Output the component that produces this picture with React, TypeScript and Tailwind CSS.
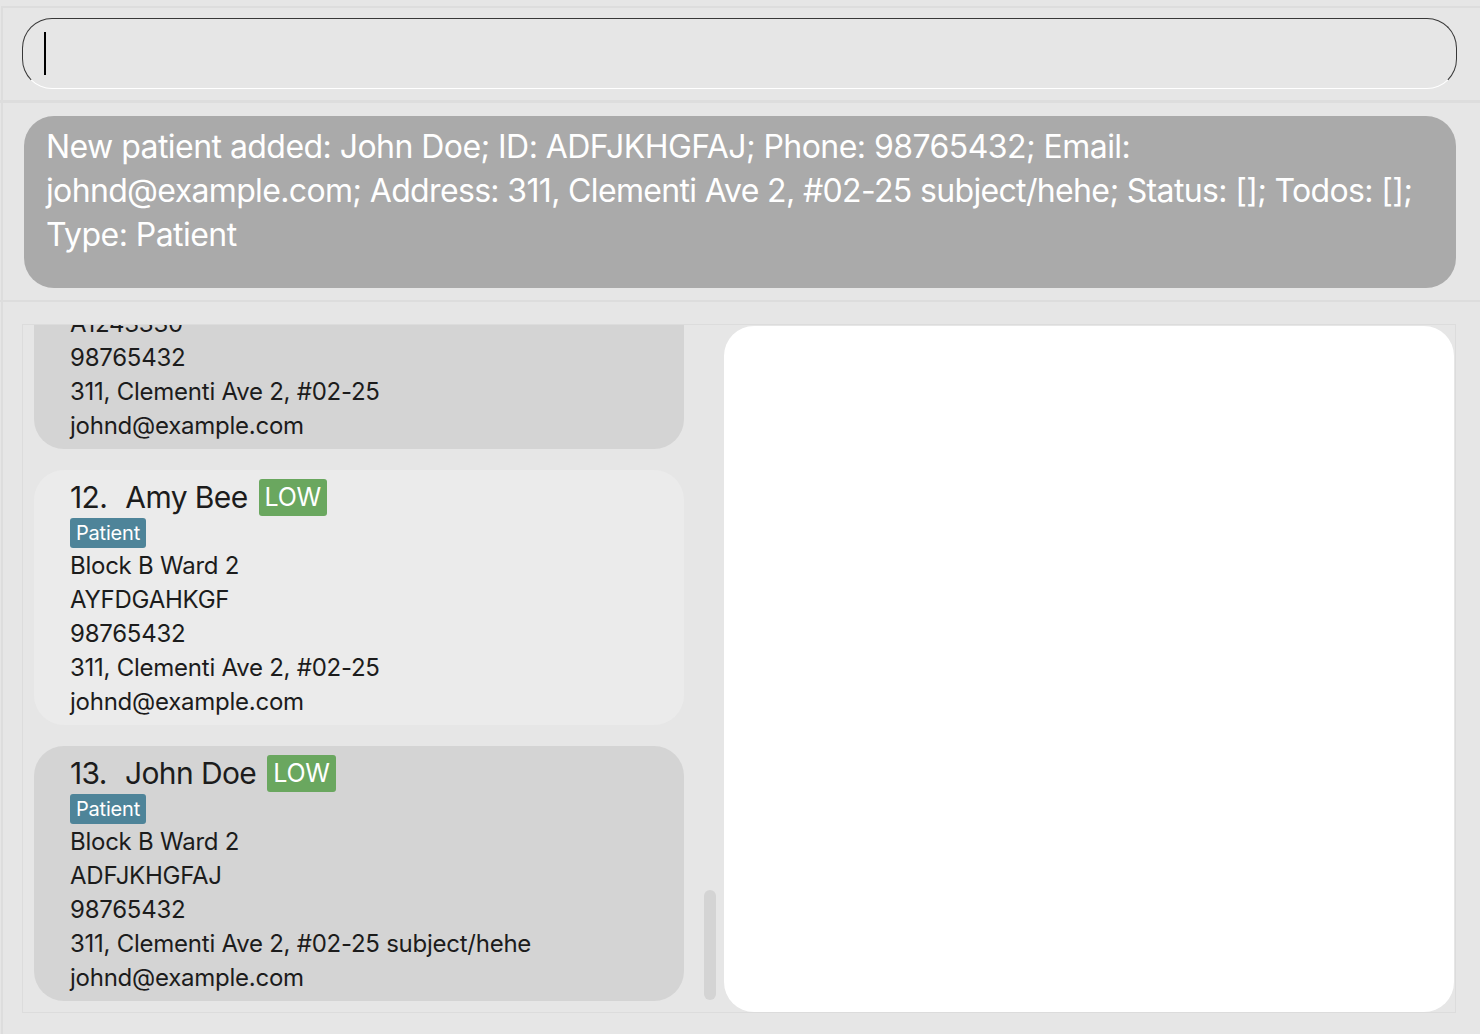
import React from "react";

type Person = {
  idx: number;
  name: string;
  ward: string;
  id: string;
  phone: string;
  address: string;
  email: string;
  bg: string;
};

const people: Person[] = [
  {
    idx: 12,
    name: "Amy Bee",
    ward: "Block B Ward 2",
    id: "AYFDGAHKGF",
    phone: "98765432",
    address: "311, Clementi Ave 2, #02-25",
    email: "johnd@example.com",
    bg: "bg-[#ebebeb]",
  },
  {
    idx: 13,
    name: "John Doe",
    ward: "Block B Ward 2",
    id: "ADFJKHGFAJ",
    phone: "98765432",
    address: "311, Clementi Ave 2, #02-25 subject/hehe",
    email: "johnd@example.com",
    bg: "bg-[#d4d4d4]",
  },
];

function Card({ p }: { p: Person }) {
  return (
    <div className={`${p.bg} w-[650px] h-[255px] shrink-0 rounded-[30px] pl-[36px]`}>
      <div className="mt-[9px] h-[37px] flex items-center text-[30px] text-[#1c1c1c] tracking-[-0.6px]">
        <span>{p.idx}.</span>
        <span className="ml-[18px]">{p.name}</span>
        <span className="ml-[11px] h-[37px] px-[6px] flex items-center rounded-[3px] bg-[#6aa75f] text-white text-[25px] tracking-[-0.3px]">
          LOW
        </span>
      </div>
      <div className="mt-[2px] h-[30px] w-fit px-[6px] flex items-center rounded-[3px] bg-[#4e8499] text-white text-[20px] tracking-[-0.2px]">
        Patient
      </div>
      <div className="text-[24px] leading-[34px] text-[#1c1c1c] mt-[1px] tracking-[-0.25px]">
        <div>{p.ward}</div>
        <div>{p.id}</div>
        <div>{p.phone}</div>
        <div>{p.address}</div>
        <div>{p.email}</div>
      </div>
    </div>
  );
}

function PartialCard() {
  return (
    <div className="bg-[#d4d4d4] w-[650px] h-[124px] shrink-0 rounded-b-[30px] pl-[36px] overflow-hidden">
      <div className="text-[24px] leading-[34px] text-[#1c1c1c] mt-[-18px] tracking-[-0.25px]">
        <div>A1243330</div>
        <div>98765432</div>
        <div>311, Clementi Ave 2, #02-25</div>
        <div>johnd@example.com</div>
      </div>
    </div>
  );
}

export default function App() {
  return (
    <div
      className="w-[1480px] h-[1034px] bg-[#e6e6e6] overflow-hidden"
      style={{ fontFamily: "Inter, 'Noto Sans', sans-serif" }}
    >
      <div className="h-[6px]" />
      {/* command box section */}
      <div className="h-[94px] border-t-2 border-l-2 border-[#dddddd] ml-[1px] pt-[10px] pl-[19px]">
        <div className="w-[1435px] h-[71px] rounded-[30px] border-[1.5px] border-t-[#383838] border-l-[#383838] border-r-[#383838] border-b-white flex items-center pl-[21px]">
          <div className="w-[2px] h-[43px] bg-black" />
        </div>
      </div>
      <div className="h-[3px] bg-[#dddddd]" />
      {/* result section */}
      <div className="h-[197px] pt-[13px] pl-[21px] border-l-2 border-[#dddddd] ml-[1px]">
        <div className="w-[1432px] h-[172px] rounded-[30px] bg-[#aaaaaa] pt-[9px] pl-[22px] text-white text-[32px] leading-[44px] tracking-[-0.55px]">
          <div className="whitespace-nowrap">
            New patient added: John Doe; ID: ADFJKHGFAJ; Phone: 98765432; Email:
          </div>
          <div className="whitespace-nowrap tracking-[-0.65px]">
            johnd@example.com; Address: 311, Clementi Ave 2, #02-25 subject/hehe; Status: []; Todos: [];
          </div>
          <div className="whitespace-nowrap">Type: Patient</div>
        </div>
      </div>
      <div className="h-[2px] bg-[#dddddd]" />
      {/* list section */}
      <div className="h-[732px] pt-[22px] pl-[19px] border-l-2 border-[#dddddd] ml-[1px]">
        <div className="w-[1434px] h-[689px] border border-[#dcdcdc] flex">
          <div className="w-[667px] shrink-0 pl-[11px] h-full overflow-hidden flex flex-col gap-[21px]">
            <PartialCard />
            {people.map((p) => (
              <Card key={p.idx} p={p} />
            ))}
          </div>
          <div className="w-[34px] shrink-0 h-full flex flex-col justify-end items-start pb-[12px] pl-[14px]">
            <div className="w-[12px] h-[110px] rounded-full bg-[#d4d4d4]" />
          </div>
          <div className="w-[730px] shrink-0 h-[686px] mt-[1px] rounded-[30px] bg-white" />
        </div>
      </div>
    </div>
  );
}
